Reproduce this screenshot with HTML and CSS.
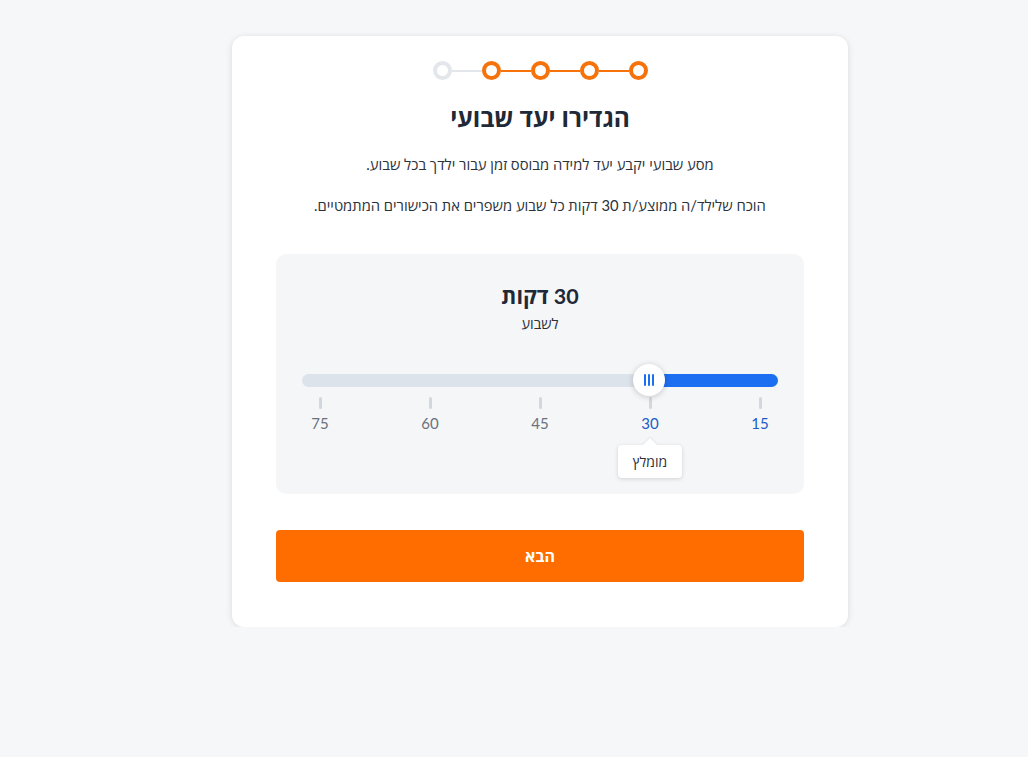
FILE: index.html
```html
<!DOCTYPE html>
<html lang="he" dir="rtl">
<head>
<meta charset="utf-8">
<title>הגדירו יעד שבועי</title>
<link rel="stylesheet" href="styles.css">
</head>
<body>
<main class="page">
  <section class="card">
    <div class="stepper">
      <span class="step done"></span>
      <span class="line done"></span>
      <span class="step done"></span>
      <span class="line done"></span>
      <span class="step done"></span>
      <span class="line done"></span>
      <span class="step done"></span>
      <span class="line"></span>
      <span class="step"></span>
    </div>
    <h1 class="title">הגדירו יעד שבועי</h1>
    <p class="text">מסע שבועי יקבע יעד למידה מבוסס זמן עבור ילדך בכל שבוע.</p>
    <p class="text">הוכח שלילד/ה ממוצע/ת 30 דקות כל שבוע משפרים את הכישורים המתמטיים.</p>

    <div class="goal-box">
      <div class="goal-value">30 דקות</div>
      <div class="goal-sub">לשבוע</div>

      <div class="slider">
        <div class="track">
          <div class="fill"></div>
        </div>
        <div class="thumb"><span></span><span></span><span></span></div>
      </div>

      <div class="ticks">
        <div class="tick active"><span class="mark"></span><span class="num">15</span></div>
        <div class="tick active"><span class="mark"></span><span class="num">30</span><span class="tip">מומלץ</span></div>
        <div class="tick"><span class="mark"></span><span class="num">45</span></div>
        <div class="tick"><span class="mark"></span><span class="num">60</span></div>
        <div class="tick"><span class="mark"></span><span class="num">75</span></div>
      </div>
    </div>

    <button class="next">הבא</button>
  </section>
</main>
</body>
</html>
```
FILE: styles.css
```css
* { box-sizing: border-box; }
html, body {
  margin: 0;
  padding: 0;
  background: #f6f7f9;
  font-family: "Lato", "Open Sans", sans-serif;
  color: #1f2937;
}
.page {
  display: flex;
  justify-content: center;
  padding: 36px 0 0 52px;
}
.card {
  width: 616px;
  background: #fff;
  border-radius: 12px;
  box-shadow: 0 1px 6px rgba(0,0,0,0.12);
  padding: 25px 44px 45px;
  display: flex;
  flex-direction: column;
  align-items: stretch;
}
.stepper {
  display: flex;
  align-items: center;
  justify-content: center;
  direction: rtl;
}
.step {
  width: 19px;
  height: 19px;
  border-radius: 50%;
  border: 4px solid #e3e6ea;
  background: #fff;
}
.step.done { border-color: #f5730a; }
.line {
  width: 30px;
  height: 2px;
  background: #e3e6ea;
}
.line.done { background: #f5730a; }
.title {
  margin: 23px 0 0;
  font-size: 24.5px;
  line-height: 30px;
  font-weight: 700;
  text-align: center;
  color: #1f2937;
}
.text {
  margin: 21px 0 0;
  font-size: 14.75px;
  line-height: 20px;
  text-align: center;
  color: #2b323b;
}
.goal-box {
  margin-top: 39px;
  background: #f4f6f8;
  border-radius: 10px;
  padding: 28px 26px 16px;
  display: flex;
  flex-direction: column;
  align-items: stretch;
}
.goal-value {
  font-size: 21.5px;
  line-height: 28px;
  font-weight: 700;
  text-align: center;
  color: #1f2937;
}
.goal-sub {
  margin-top: 4px;
  font-size: 14.5px;
  line-height: 20px;
  text-align: center;
  color: #2b323b;
}
.slider {
  position: relative;
  margin-top: 30px;
  height: 32px;
  display: flex;
  align-items: center;
}
.track {
  width: 100%;
  height: 13px;
  border-radius: 7px;
  background: #dde3ea;
  display: flex;
  overflow: hidden;
}
.fill {
  width: 27%;
  background: #1d6ff2;
}
.thumb {
  position: absolute;
  top: 0;
  right: calc(27% - 16px);
  width: 32px;
  height: 32px;
  border-radius: 50%;
  background: #fff;
  box-shadow: 0 1px 6px rgba(0,0,0,0.2);
  display: flex;
  align-items: center;
  justify-content: center;
  gap: 2px;
}
.thumb span {
  width: 2px;
  height: 12px;
  background: #1d6ff2;
  border-radius: 1px;
}
.ticks {
  display: flex;
  justify-content: space-between;
  margin-top: 1px;
}
.tick {
  width: 36px;
  display: flex;
  flex-direction: column;
  align-items: center;
}
.mark {
  width: 3px;
  height: 12px;
  border-radius: 2px;
  background: #d3d8de;
}
.num {
  margin-top: 4px;
  font-size: 15px;
  line-height: 20px;
  color: #6b7280;
}
.tick.active .num { color: #1e5bc6; }
.tip {
  position: relative;
  margin-top: 12px;
  width: 64px;
  height: 33px;
  flex: none;
  background: #fff;
  border-radius: 4px;
  box-shadow: 0 1px 4px rgba(0,0,0,0.15);
  font-size: 14px;
  line-height: 33px;
  text-align: center;
  color: #2b323b;
}
.tip::before {
  content: "";
  position: absolute;
  top: -5px;
  left: 50%;
  width: 10px;
  height: 10px;
  margin-left: -5px;
  background: #fff;
  transform: rotate(45deg);
  box-shadow: -1px -1px 2px rgba(0,0,0,0.06);
}
.next {
  margin-top: 36px;
  height: 52px;
  border: none;
  border-radius: 4px;
  background: #ff6d00;
  color: #fff;
  font-family: inherit;
  font-size: 16px;
  font-weight: 700;
}
```
